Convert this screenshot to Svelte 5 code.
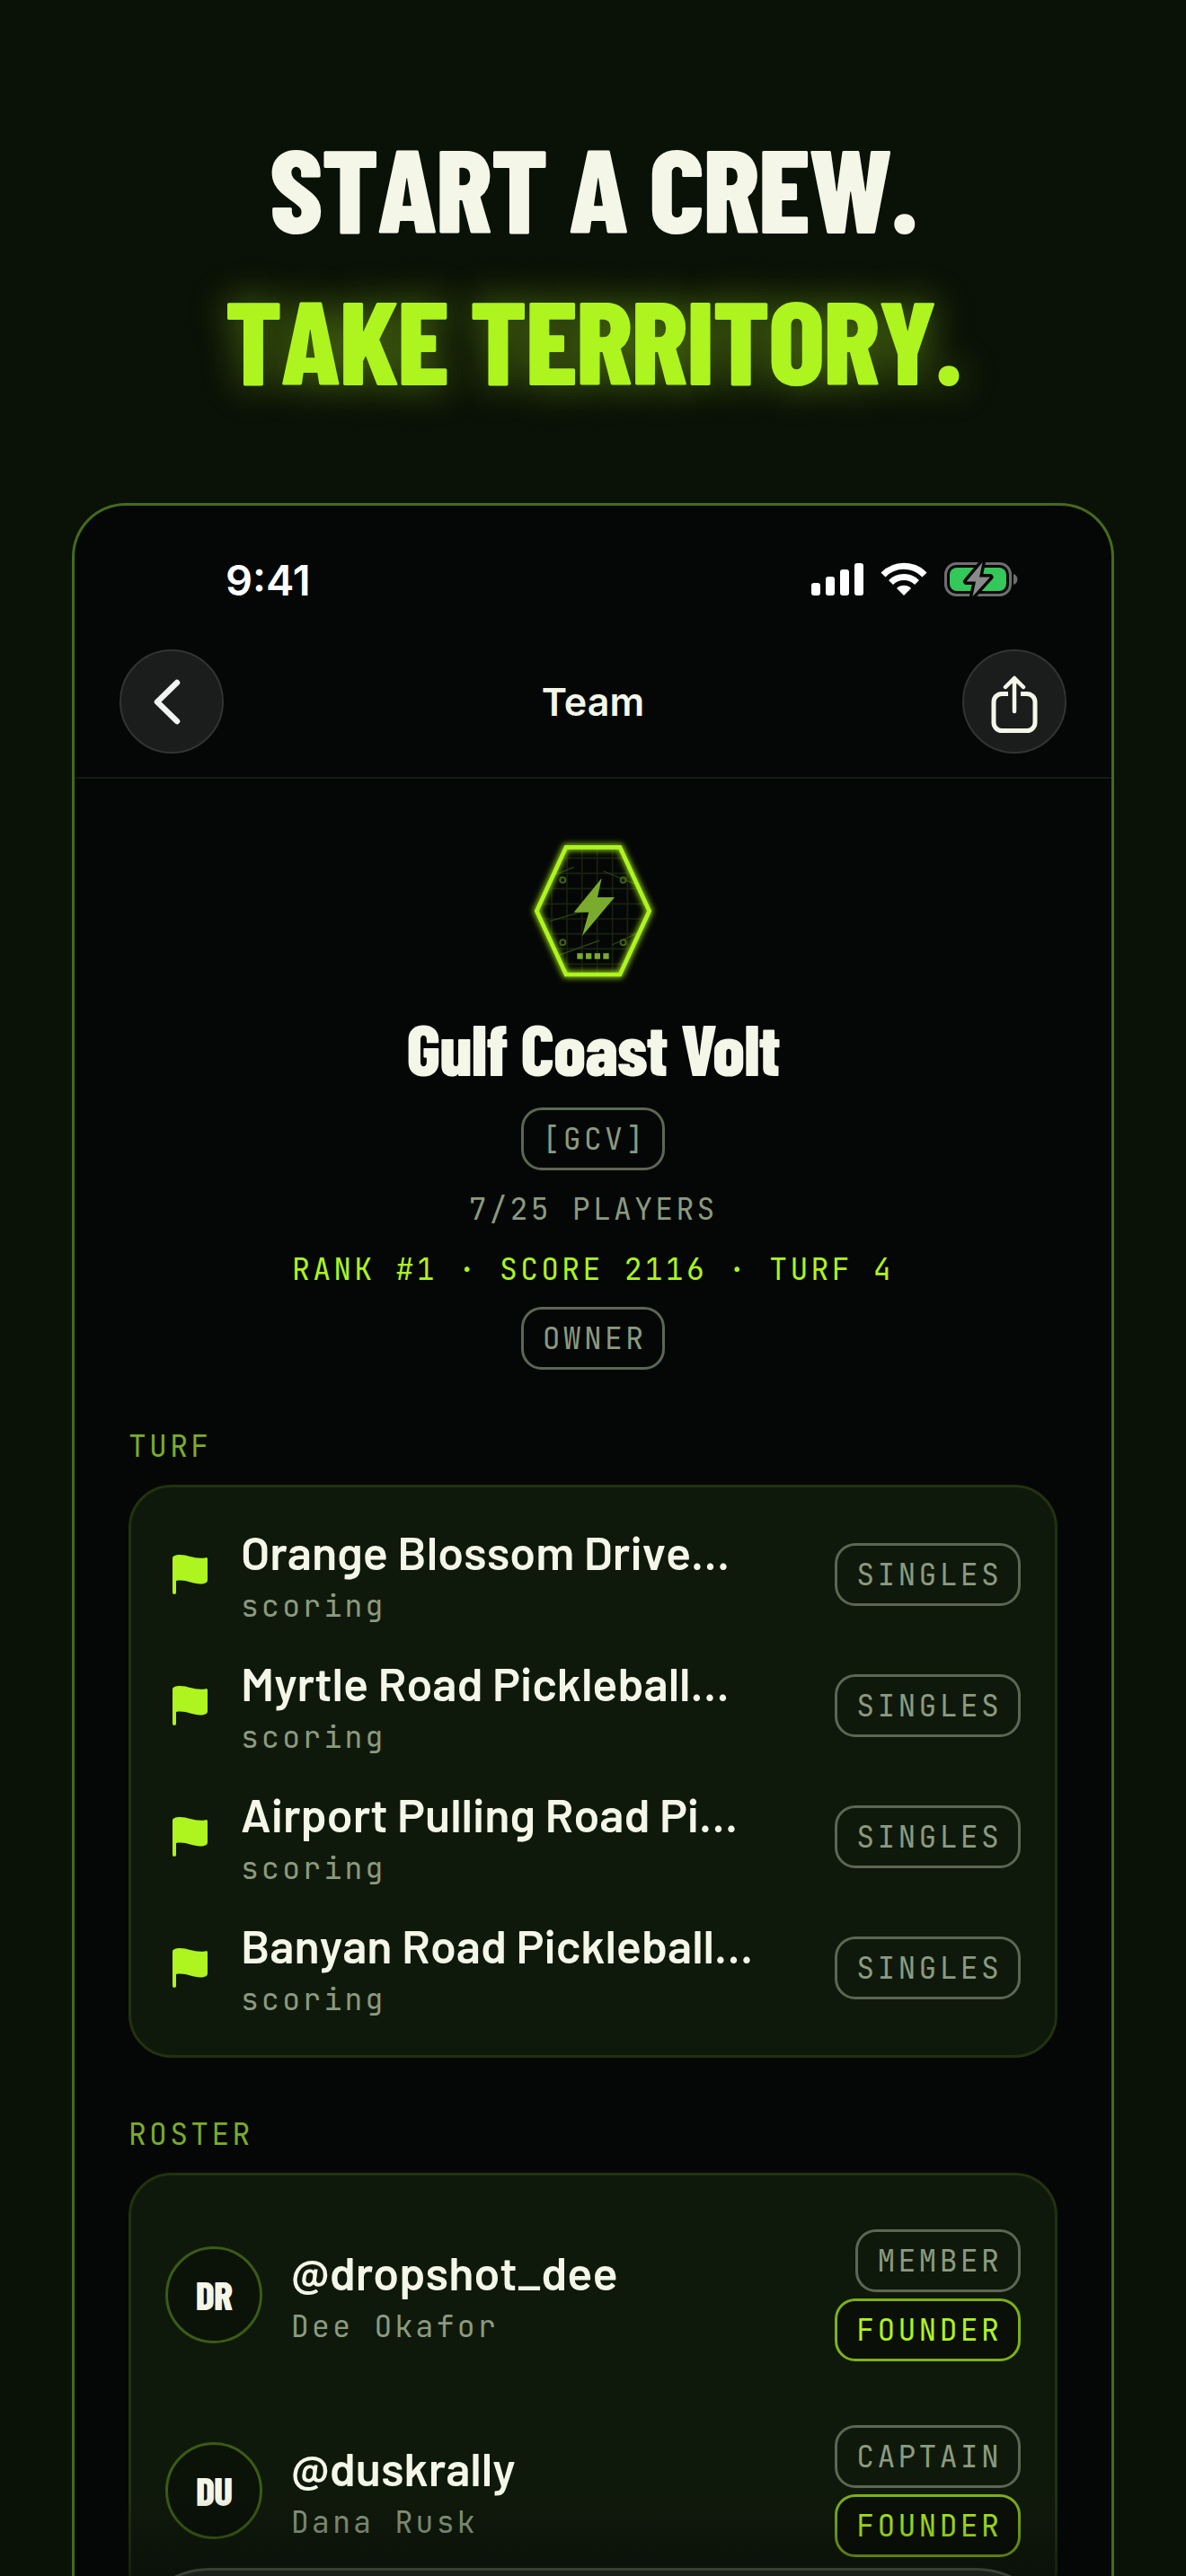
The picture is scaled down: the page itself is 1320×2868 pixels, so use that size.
<script lang="ts">
	interface Court {
		name: string;
		status: string;
		format: string;
	}

	interface Player {
		initials: string;
		handle: string;
		name: string;
		role: string;
	}

	const courts: Court[] = [
		{ name: 'Orange Blossom Drive…', status: 'scoring', format: 'SINGLES' },
		{ name: 'Myrtle Road Pickleball…', status: 'scoring', format: 'SINGLES' },
		{ name: 'Airport Pulling Road Pi…', status: 'scoring', format: 'SINGLES' },
		{ name: 'Banyan Road Pickleball…', status: 'scoring', format: 'SINGLES' }
	];

	const players: Player[] = [
		{ initials: 'DR', handle: '@dropshot_dee', name: 'Dee Okafor', role: 'MEMBER' },
		{ initials: 'DU', handle: '@duskrally', name: 'Dana Rusk', role: 'CAPTAIN' }
	];

	// Crest background, in the crest's own 600x600 space
	const gridX = [162, 213, 263, 314, 365, 415];
	const gridY = [136, 187, 238, 289, 339, 389, 439, 490];
	const rivets = [
		[199, 209],
		[401, 209],
		[199, 418],
		[401, 418]
	];
</script>

<main class="poster">
	<h1 class="headline">
		<span>START A CREW.</span>
		<span class="headline-accent">TAKE TERRITORY.</span>
	</h1>

	<div class="phone">
		<div class="status-bar">
			<span class="time">9:41</span>
			<svg class="status-icons" viewBox="3 2 234 44" aria-hidden="true">
				<g fill="#fff">
					<rect x="3" y="27" width="10" height="14" rx="3" />
					<rect x="19" y="20" width="10" height="21" rx="3" />
					<rect x="35" y="12" width="10" height="29" rx="3" />
					<rect x="51" y="5" width="10" height="36" rx="3" />
				</g>
				<g fill="none" stroke="#fff" stroke-width="7">
					<path d="M83 18a32 32 0 0 1 46 0" />
					<path d="M91.5 26.5a20.5 20.5 0 0 1 29 0" />
				</g>
				<path d="M106 41l-8-8a11.3 11.3 0 0 1 16 0z" fill="#fff" />
				<rect
					x="152.5"
					y="5.5"
					width="72"
					height="35"
					rx="12"
					fill="none"
					stroke="#6d6e6d"
					stroke-width="3"
				/>
				<path d="M228 17c6 2 6 10 0 12z" fill="#6d6e6d" />
				<rect x="157" y="10" width="63" height="26" rx="8" fill="#34c759" />
				<path
					d="M193.500 4L175.500 25.500h10.500L182.500 42l19.500-21.500h-12z"
					fill="#8a8a8a"
					stroke="#050706"
					stroke-width="7"
					stroke-linejoin="round"
					paint-order="stroke"
				/>
			</svg>
		</div>

		<header class="nav-bar">
			<button class="round-button" type="button" aria-label="Back">
				<svg viewBox="2 2 112 112" aria-hidden="true">
					<path
						d="M64 37L42 58.5L64 80"
						fill="none"
						stroke="#f2f2f2"
						stroke-width="6.5"
						stroke-linecap="round"
						stroke-linejoin="round"
					/>
				</svg>
			</button>
			<h2 class="nav-title">Team</h2>
			<button class="round-button" type="button" aria-label="Share">
				<svg viewBox="2 2 112 112" aria-hidden="true">
					<g fill="none" stroke="#f4f7e8" stroke-width="4.5">
						<path d="M58 69V32M48 42L58 32L68 42" stroke-linecap="round" stroke-linejoin="round" />
						<path
							d="M51 49.5H44a9 9 0 0 0-9 9V81.5a9 9 0 0 0 9 9H72a9 9 0 0 0 9-9V58.5a9 9 0 0 0-9-9H65"
							stroke-width="5"
						/>
					</g>
				</svg>
			</button>
		</header>

		<section class="team">
			<svg class="crest" viewBox="0 0 600 600" aria-hidden="true">
				<defs>
					<clipPath id="crest-clip">
						<path d="M210 100H390L488 313L390 525H210L112 313z" />
					</clipPath>
					<filter id="crest-glow" x="-20%" y="-20%" width="140%" height="140%">
						<feGaussianBlur stdDeviation="10" />
					</filter>
				</defs>
				<g clip-path="url(#crest-clip)" fill="none">
					<g stroke="#18220f" stroke-width="5">
						{#each gridX as x}
							<path d="M{x} 90V535" />
						{/each}
						{#each gridY as y}
							<path d="M100 {y}H500" />
						{/each}
					</g>
					<path
						d="M170 193L236 166M335 180L440 222M155 347L262 315M190 459L322 411M364 426L450 386"
						stroke="#2c4214"
						stroke-width="4"
					/>
				</g>
				{#each rivets as [x, y]}
					<circle cx={x} cy={y} r="9" fill="none" stroke="#406018" stroke-width="6" />
				{/each}
				<path
					d="M210 100H390L488 313L390 525H210L112 313z"
					fill="none"
					stroke="#8fce18"
					stroke-width="22"
					filter="url(#crest-glow)"
				/>
				<path
					d="M210 100H390L488 313L390 525H210L112 313z"
					fill="none"
					stroke="#aef41f"
					stroke-width="14"
				/>
				<path d="M329 203L236 317H286L264 396L372 267H315z" fill="#7aab2c" />
				<path
					d="M247 454h19v19h-19zM276 454h19v19h-19zM305 454h19v19h-19zM334 454h19v19h-19z"
					fill="#7aab2c"
				/>
			</svg>
			<h3 class="team-name">Gulf Coast Volt</h3>
			<span class="tag">[GCV]</span>
			<p class="meta">7/25 PLAYERS</p>
			<p class="meta meta-accent">RANK #1 · SCORE 2116 · TURF 4</p>
			<span class="tag">OWNER</span>
		</section>

		<section class="group">
			<h4 class="group-label">TURF</h4>
			<ul class="card">
				{#each courts as court}
					<li class="row">
						<svg class="flag" viewBox="0 0 52 52" aria-hidden="true">
							<path
								d="M8 8C8 5 12 4 16 4C26 4 32 9 44 7.5Q47 6 47 9V32C47 35 44 36.5 39 36.5C30 36.5 22 31 12 33V46Q12 48 10 48T8 46z"
								fill="#aef41f"
							/>
						</svg>
						<div class="row-text">
							<span class="row-title">{court.name}</span>
							<span class="row-sub">{court.status}</span>
						</div>
						<span class="tag">{court.format}</span>
					</li>
				{/each}
			</ul>
		</section>

		<section class="group">
			<h4 class="group-label">ROSTER</h4>
			<ul class="card">
				{#each players as player}
					<li class="row row-player">
						<span class="avatar">{player.initials}</span>
						<div class="row-text">
							<span class="row-title">{player.handle}</span>
							<span class="row-sub">{player.name}</span>
						</div>
						<div class="tags">
							<span class="tag">{player.role}</span>
							<span class="tag tag-founder">FOUNDER</span>
						</div>
					</li>
				{/each}
			</ul>
		</section>
	</div>

	<div class="fade"></div>
	<div class="dock"></div>
</main>

<style>
	:global(body) {
		margin: 0;
		background: #0a1107;
	}

	.poster {
		--lime: #aef41f;
		--lime-dim: #7aab2c;
		--cream: #f4f7e8;
		--sage: #8b9a7f;
		--screen: #050706;
		--mono: 'JetBrains Mono', 'DejaVu Sans Mono', monospace;
		--display: 'Barlow Condensed', 'Roboto Condensed', Roboto, sans-serif;

		position: relative;
		box-sizing: border-box;
		height: 100vh;
		padding: 123px 80px 0;
		overflow: hidden;
		background: #0a1107;
		color: var(--cream);
		font-family: Barlow, Roboto, sans-serif;
	}

	h1,
	h2,
	h3,
	h4,
	p,
	ul {
		margin: 0;
		padding: 0;
	}

	.headline {
		display: flex;
		flex-direction: column;
		align-items: center;
		margin-bottom: 99px;
		font-family: var(--display);
		font-kerning: none;
		font-size: 132px;
		font-weight: 800;
		letter-spacing: -2px;
		line-height: 169px;
		white-space: nowrap;
	}

	.headline-accent {
		color: var(--lime);
		text-shadow: 0 0 44px rgba(174, 244, 31, 0.45);
	}

	.phone {
		border: 3px solid #456a1b;
		border-bottom: 0;
		border-radius: 60px 60px 0 0;
		background: var(--screen);
	}

	.status-bar {
		display: flex;
		align-items: center;
		justify-content: space-between;
		padding: 60px 100px 0 168px;
	}

	.time {
		color: #fff;
		font-family: Inter, sans-serif;
		font-size: 47px;
		font-weight: 600;
		line-height: 46px;
	}

	.status-icons {
		width: 234px;
		height: 44px;
	}

	.nav-bar {
		display: flex;
		align-items: center;
		justify-content: space-between;
		padding: 54px 50px 26px;
		border-bottom: 2px solid #131b10;
	}

	.nav-title {
		font-family: Inter, sans-serif;
		font-size: 43px;
		font-weight: 600;
		line-height: 52px;
	}

	.round-button {
		box-sizing: border-box;
		width: 116px;
		height: 116px;
		padding: 0;
		border: 2px solid #303432;
		border-radius: 50%;
		background: #1b1d1c;
	}

	.round-button svg {
		display: block;
		width: 100%;
		height: 100%;
	}

	.team {
		display: flex;
		flex-direction: column;
		align-items: center;
		padding-top: 43px;
	}

	.crest {
		width: 200px;
		height: 200px;
	}

	.team-name {
		margin: 11px 0 22px;
		font-family: var(--display);
		font-size: 80px;
		font-weight: 800;
		letter-spacing: -1px;
		line-height: 90px;
	}

	.meta {
		margin-top: 21px;
		color: var(--sage);
		font-family: var(--mono);
		font-size: 33px;
		letter-spacing: 0.1em;
		line-height: 44px;
	}

	.meta-accent {
		margin-top: 23px;
		margin-bottom: 20px;
		color: var(--lime);
	}

	.tag {
		box-sizing: border-box;
		height: 70px;
		padding: 0 18px 0 21px;
		border: 3px solid #5b6753;
		border-radius: 23px;
		color: var(--sage);
		font-family: var(--mono);
		font-size: 33px;
		letter-spacing: 0.1em;
		line-height: 64px;
		white-space: nowrap;
	}

	.tag-founder {
		border-color: #7fb016;
		background: #0a0f07;
		color: var(--lime);
	}

	.group {
		padding: 65px 60px 0;
	}

	.group-label {
		color: var(--lime-dim);
		font-family: var(--mono);
		font-size: 33px;
		font-weight: 400;
		letter-spacing: 0.1em;
		line-height: 40px;
	}

	.card {
		margin-top: 23px;
		padding: 24px 38px;
		border: 3px solid #22320f;
		border-radius: 48px;
		background: #0f190b;
		list-style: none;
	}

	.row {
		display: flex;
		align-items: center;
		gap: 32px;
		height: 146px;
	}

	.row-player {
		height: 218px;
	}

	.flag {
		flex: none;
		width: 52px;
		height: 52px;
	}

	.row-text {
		display: flex;
		flex: 1;
		flex-direction: column;
		min-width: 0;
	}

	.row-title {
		font-kerning: none;
		font-size: 52px;
		font-weight: 600;
		line-height: 70px;
		white-space: nowrap;
	}

	.row-sub {
		color: var(--sage);
		font-family: var(--mono);
		font-size: 33px;
		letter-spacing: 0.1em;
		line-height: 52px;
	}

	.avatar {
		box-sizing: border-box;
		flex: none;
		width: 108px;
		height: 108px;
		border: 3px solid #3a5b15;
		border-radius: 50%;
		background: #0b1208;
		font-family: var(--display);
		font-size: 44px;
		font-weight: 800;
		letter-spacing: -1px;
		line-height: 102px;
		text-align: center;
	}

	.tags {
		display: flex;
		flex-direction: column;
		align-items: flex-end;
		gap: 7px;
	}

	.fade {
		position: absolute;
		right: 83px;
		bottom: 0;
		left: 83px;
		height: 90px;
		background: linear-gradient(rgba(5, 7, 6, 0), rgba(5, 7, 6, 0.4));
	}

	.dock {
		position: absolute;
		right: 143px;
		bottom: -173px;
		left: 143px;
		height: 176px;
		border: 3px solid #364034;
		border-radius: 90px;
		background: #1a201a;
	}
</style>
